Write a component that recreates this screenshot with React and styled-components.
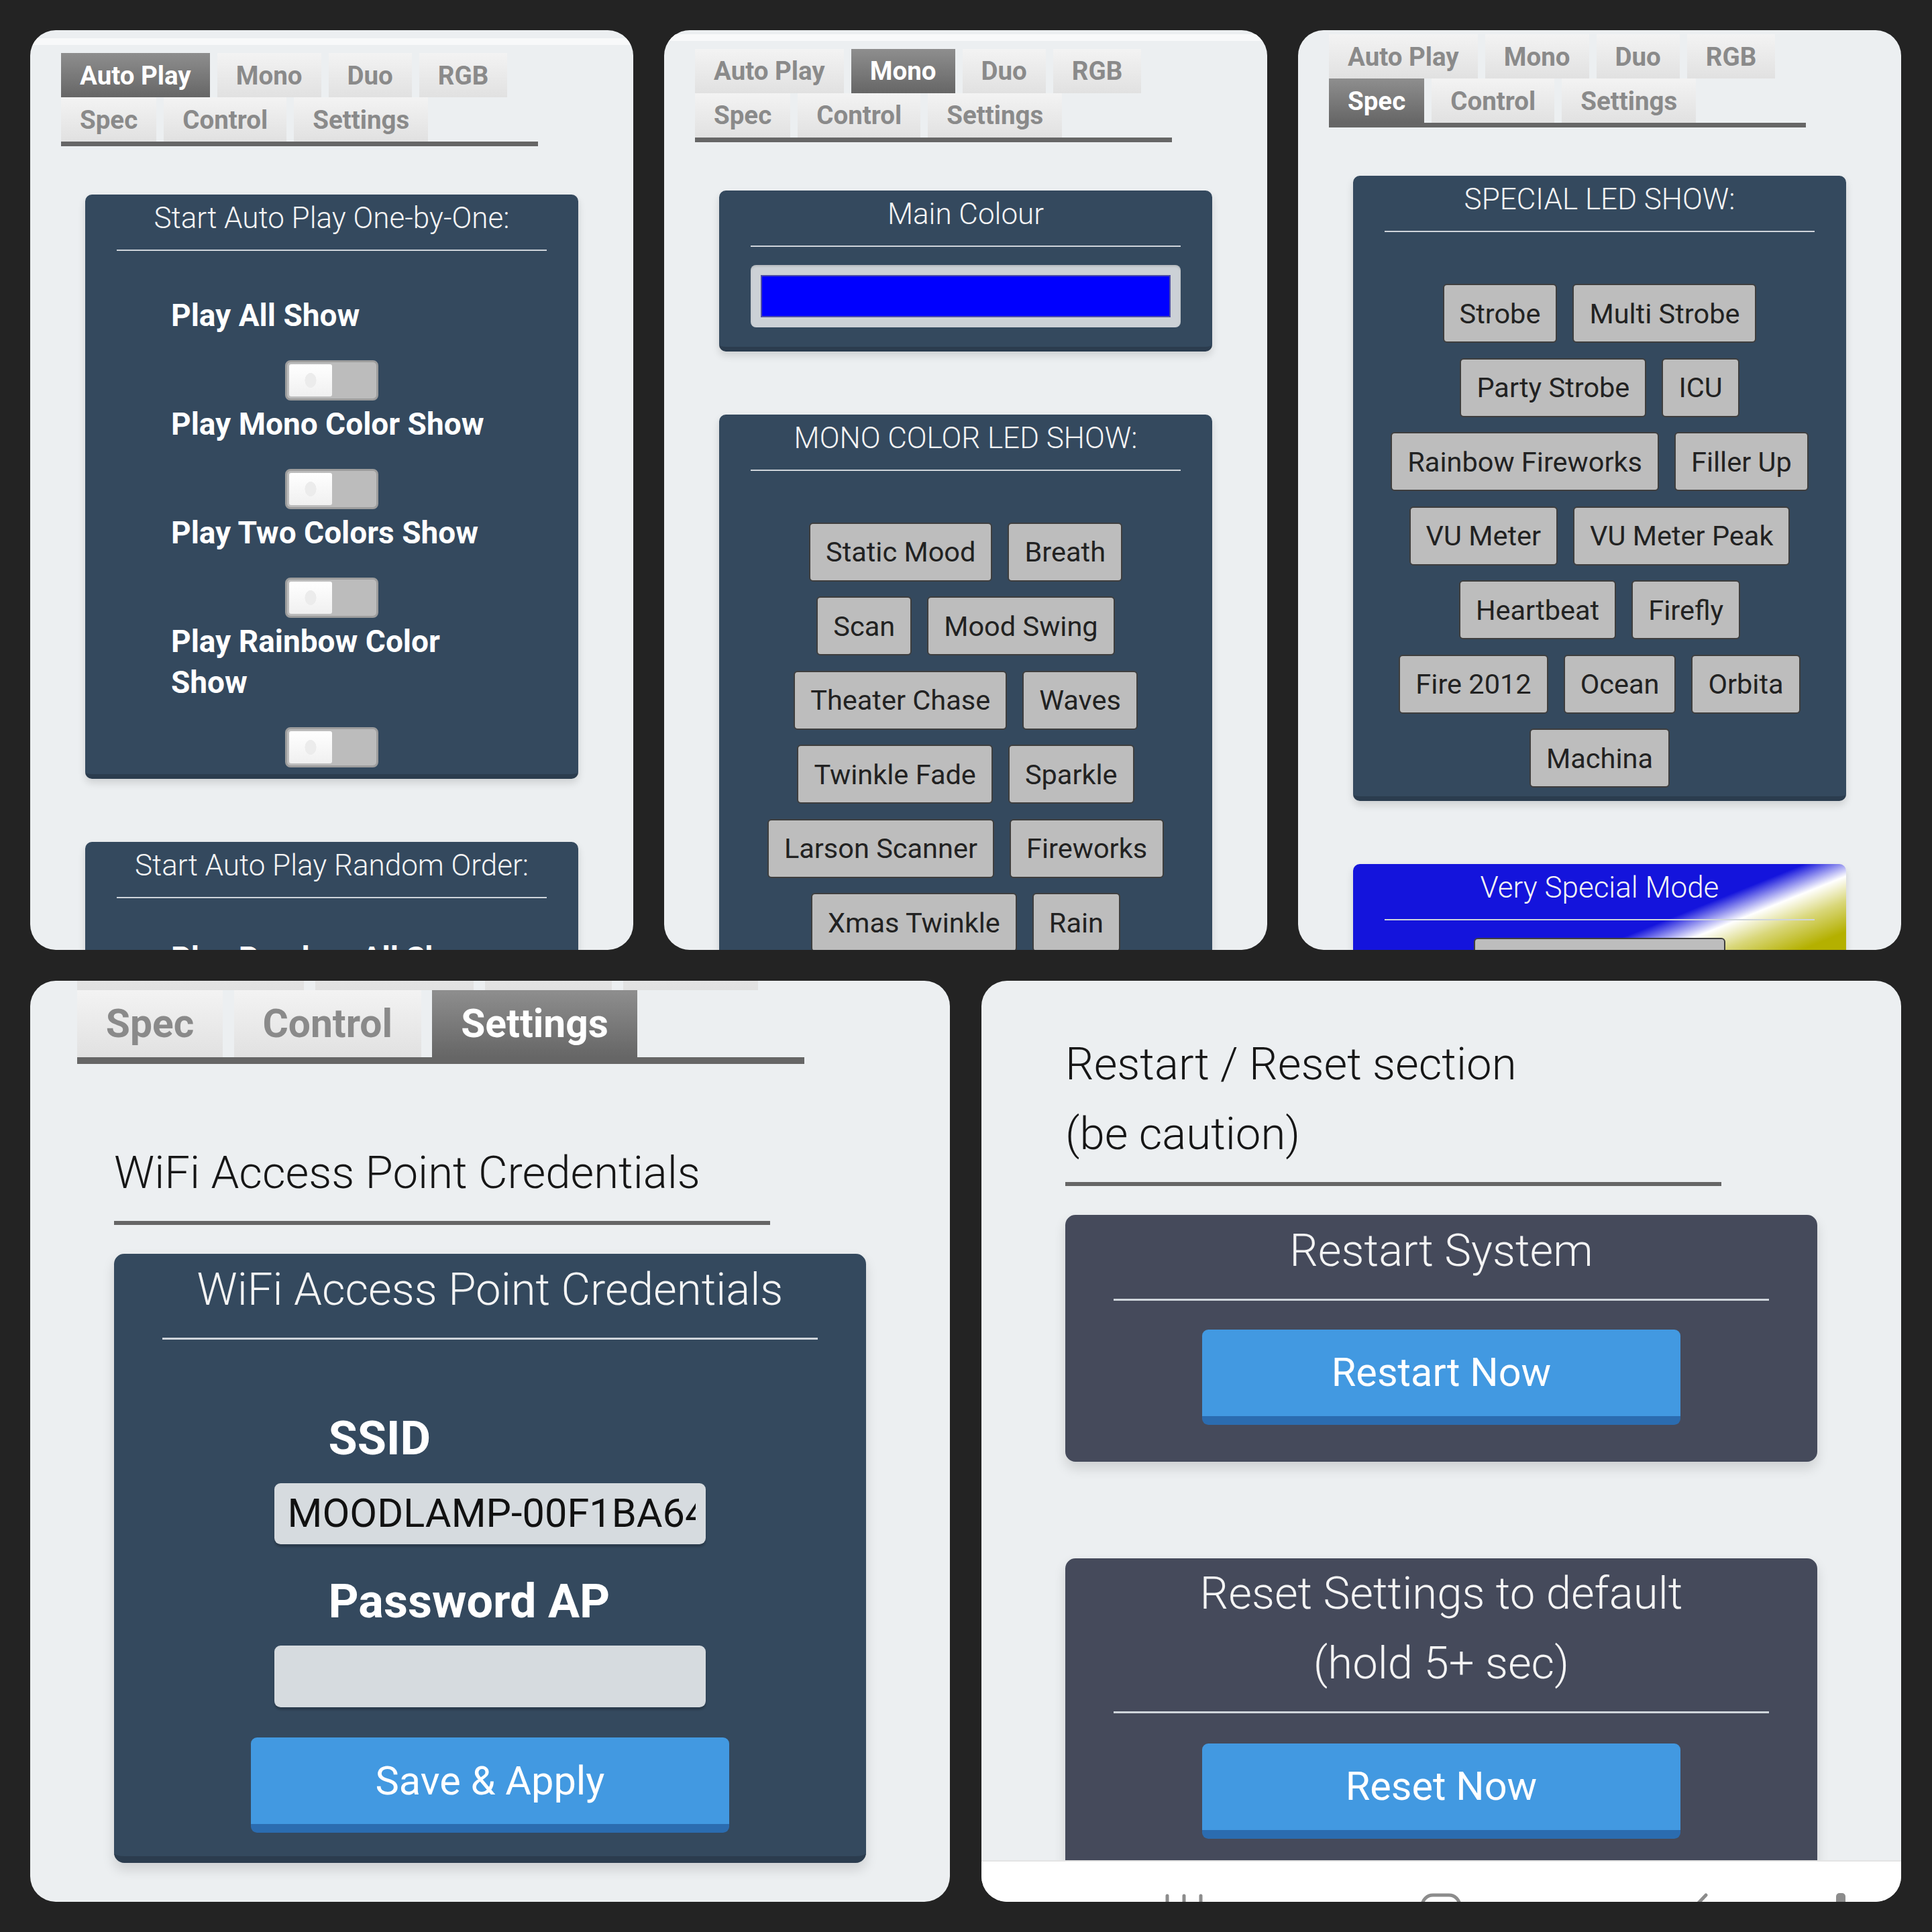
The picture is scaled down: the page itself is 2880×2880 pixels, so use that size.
import React from 'react';
import styled, { createGlobalStyle } from 'styled-components';

const GlobalStyle = createGlobalStyle`
  html, body {
    margin: 0;
    padding: 0;
    background: #232323;
  }
  body {
    font-family: Roboto, "Liberation Sans", sans-serif;
  }
  * {
    box-sizing: border-box;
  }
`;

const Board = styled.div`
  width: 2880px;
  height: 2880px;
  padding: 45px 46px 45px 45px;
  background: #232323;
  display: flex;
  flex-direction: column;
  gap: 46px;
`;

const TopRow = styled.div`
  display: grid;
  grid-template-columns: repeat(3, 899px);
  column-gap: 46px;
  height: 1371px;
`;

const BottomRow = styled.div`
  display: grid;
  grid-template-columns: repeat(2, 1371px);
  column-gap: 47px;
  height: 1373px;
`;

const Panel = styled.section`
  position: relative;
  overflow: hidden;
  border-radius: 38px;
  background: #eceff1;
`;

// one phone screenshot: the same page, zoomed and scrolled
const Screen = styled.div`
  display: flow-root;
  width: 899px;
  zoom: ${(p) => p.$zoom};
  margin-top: ${(p) => -p.$scroll}px;
`;

const PageTop = styled.div`
  margin-top: 12px;
  height: 10px;
  background: #f8f9fa;
`;

const TabBar = styled.nav`
  display: flex;
  flex-wrap: wrap;
  column-gap: 11px;
  width: 711px;
  margin: 12px 0 0 46px;
  border-bottom: 7px solid #666;
`;

const Tab = styled.div`
  height: 66px;
  padding: 0 28px;
  display: flex;
  align-items: center;
  font-size: 38.5px;
  font-weight: 700;
  color: ${(p) => (p.$active ? '#ffffff' : '#8a8a8a')};
  background: ${(p) =>
    p.$active
      ? 'linear-gradient(#8e8e8e, #666666)'
      : 'linear-gradient(#f3f3f3, #e1e1e1)'};
`;

const Content = styled.div`
  padding: ${(p) => p.$top}px 82px 0;
`;

const Card = styled.div`
  background: ${(p) =>
    p.$special
      ? 'linear-gradient(158deg, #1414dc 0px, #1414dc 252px, #ffffff 292px, #d9d77a 326px, #b4b000 369px)'
      : p.$slate
      ? '#454a5b'
      : '#34495e'};
  border-radius: 10px;
  border-bottom: ${(p) => (p.$slate ? 'none' : '7px solid #2b3c4e')};
  box-shadow: 0 6px 12px rgba(0, 0, 0, 0.13);
  padding-bottom: ${(p) => p.$pad}px;
  margin-bottom: 94px;
`;

const CardTitle = styled.div`
  padding: 1px 47px 0;
  font-size: 44px;
  font-weight: 300;
  line-height: 68px;
  text-align: center;
  color: #f4f4f4;
`;

const Divider = styled.div`
  margin: 13px 47px 0;
  height: 2px;
  background: #cfd5db;
`;

const ToggleList = styled.div`
  width: 479px;
  margin: ${(p) => p.$gap}px auto 0;
`;

const ToggleLabel = styled.div`
  width: 506px;
  margin-bottom: 36px;
  font-size: 46px;
  font-weight: 700;
  line-height: 61px;
  color: #ffffff;
`;

const Switch = styled.div`
  width: 139px;
  height: 60px;
  margin: 0 auto 5px;
  padding: 3px;
  border: 3px solid #9d9d9d;
  border-radius: 8px;
  background: #bcbcbc;
`;

const Knob = styled.div`
  width: 64px;
  height: 48px;
  border-radius: 3px;
  background: radial-gradient(ellipse 14px 18px at 50% 50%, #ececec 60%, transparent 62%),
    linear-gradient(#ffffff, #f0f0f0);
`;

const ShowGrid = styled.div`
  display: flex;
  flex-direction: column;
  row-gap: 22.5px;
  margin-top: 77px;
`;

const ShowRow = styled.div`
  display: flex;
  justify-content: center;
  column-gap: 23px;
`;

const ShowButton = styled.button`
  height: 88px;
  ${(p) => (p.$w ? `width: ${p.$w}px;` : '')}
  margin: ${(p) => (p.$w ? '26px auto 0' : '0')};
  display: block;
  padding: 0 23px;
  background: #bdbdbd;
  border: 2px solid #3e3e3e;
  border-radius: 6px;
  font-family: Roboto, "Liberation Sans", sans-serif;
  font-size: 41.5px;
  font-weight: 400;
  color: #222;
  white-space: nowrap;
`;

const ColorWell = styled.div`
  height: 93px;
  margin: 27px 47px 0;
  padding: 15px;
  border-radius: 8px;
  background: #ccd1d6;
  box-shadow: inset 0 2px 3px rgba(0, 0, 0, 0.12);
`;

const Swatch = styled.div`
  height: 100%;
  background: ${(p) => p.$color};
  border: 2px solid #4c4ca8;
`;

const SectionHeading = styled.h2`
  width: 641px;
  margin: 0 0 28px;
  padding-bottom: 13px;
  border-bottom: 4px solid #666;
  font-size: 44px;
  font-weight: 300;
  line-height: 68.5px;
  color: #161616;
`;

const FieldGroup = styled.div`
  width: 422px;
  margin: 63px auto 0;
`;

const FieldLabel = styled.label`
  display: block;
  padding-left: 53px;
  font-size: 46px;
  font-weight: 700;
  line-height: 68px;
  color: #ffffff;
`;

const TextBox = styled.input`
  display: block;
  width: 100%;
  height: 60px;
  margin: 9px 0 22px;
  padding: 0 10px 0 13px;
  border: none;
  border-radius: 6px;
  background: #d6dbdf;
  box-shadow: 0 2px 2px rgba(0, 0, 0, 0.2);
  font-family: Roboto, "Liberation Sans", sans-serif;
  font-size: 39px;
  color: #111;
  outline: none;
`;

const ActionButton = styled.button`
  display: block;
  width: 468px;
  height: 93px;
  margin: ${(p) => p.$gap}px auto 0;
  border: none;
  border-bottom: 9px solid #2b6cb0;
  border-radius: 6px;
  background: #4299e1;
  font-family: Roboto, "Liberation Sans", sans-serif;
  font-size: 39px;
  font-weight: 400;
  color: #ffffff;
`;

const NavBar = styled.div`
  position: absolute;
  left: 0;
  right: 0;
  bottom: 0;
  height: 62px;
  overflow: hidden;
  display: grid;
  grid-template-columns: repeat(3, 30.43%) 1fr;
  padding-left: 8%;
  background: #ffffff;
  border-top: 2px solid #e4e4e4;
`;

const NavSlot = styled.div`
  display: flex;
  justify-content: ${(p) => (p.$start ? 'flex-start' : 'center')};
  padding: 47px 0 0 ${(p) => (p.$start ? 13 : 0)}px;
`;

const TABS = ['Auto Play', 'Mono', 'Duo', 'RGB', 'Spec', 'Control', 'Settings'];

const ONE_BY_ONE = [
  'Play All Show',
  'Play Mono Color Show',
  'Play Two Colors Show',
  'Play Rainbow Color Show',
];

const MONO_SHOWS = [
  ['Static Mood', 'Breath'],
  ['Scan', 'Mood Swing'],
  ['Theater Chase', 'Waves'],
  ['Twinkle Fade', 'Sparkle'],
  ['Larson Scanner', 'Fireworks'],
  ['Xmas Twinkle', 'Rain'],
];

const SPECIAL_SHOWS = [
  ['Strobe', 'Multi Strobe'],
  ['Party Strobe', 'ICU'],
  ['Rainbow Fireworks', 'Filler Up'],
  ['VU Meter', 'VU Meter Peak'],
  ['Heartbeat', 'Firefly'],
  ['Fire 2012', 'Ocean', 'Orbita'],
  ['Machina'],
];

const Tabs = ({ active }) => (
  <>
    <PageTop />
    <TabBar>
      {TABS.map((t) => (
        <Tab key={t} $active={t === active}>
          {t}
        </Tab>
      ))}
    </TabBar>
  </>
);

const Toggles = ({ items, gap = 66 }) => (
  <ToggleList $gap={gap}>
    {items.map((label) => (
      <div key={label}>
        <ToggleLabel>{label}</ToggleLabel>
        <Switch>
          <Knob />
        </Switch>
      </div>
    ))}
  </ToggleList>
);

const Shows = ({ rows }) => (
  <ShowGrid>
    {rows.map((row) => (
      <ShowRow key={row[0]}>
        {row.map((name) => (
          <ShowButton key={name}>{name}</ShowButton>
        ))}
      </ShowRow>
    ))}
  </ShowGrid>
);

const AutoPlayPage = () => (
  <Screen $zoom={1} $scroll={0}>
    <Tabs active="Auto Play" />
    <Content $top={72}>
      <Card $pad={5}>
        <CardTitle>Start Auto Play One-by-One:</CardTitle>
        <Divider />
        <Toggles items={ONE_BY_ONE} />
      </Card>
      <Card $pad={5}>
        <CardTitle>Start Auto Play Random Order:</CardTitle>
        <Divider />
        <Toggles items={['Play Random All Show']} gap={59} />
      </Card>
    </Content>
  </Screen>
);

const MonoPage = () => (
  <Screen $zoom={1} $scroll={6.5}>
    <Tabs active="Mono" />
    <Content $top={72}>
      <Card $pad={29}>
        <CardTitle>Main Colour</CardTitle>
        <Divider />
        <ColorWell>
          <Swatch $color="#0000ff" />
        </ColorWell>
      </Card>
      <Card $pad={13}>
        <CardTitle>MONO COLOR LED SHOW:</CardTitle>
        <Divider />
        <Shows rows={MONO_SHOWS} />
      </Card>
    </Content>
  </Screen>
);

const SpecPage = () => (
  <Screen $zoom={1} $scroll={28}>
    <Tabs active="Spec" />
    <Content $top={72}>
      <Card $pad={13}>
        <CardTitle>SPECIAL LED SHOW:</CardTitle>
        <Divider />
        <Shows rows={SPECIAL_SHOWS} />
      </Card>
      <Card $special $pad={13}>
        <CardTitle>Very Special Mode</CardTitle>
        <Divider />
        <ShowButton $w={375} />
      </Card>
    </Content>
  </Screen>
);

const SettingsPage = () => (
  <Screen $zoom={1.525} $scroll={91}>
    <Tabs active="Settings" />
    <Content $top={72}>
      <SectionHeading>WiFi Access Point Credentials</SectionHeading>
      <Card $pad={23}>
        <CardTitle>WiFi Access Point Credentials</CardTitle>
        <Divider />
        <FieldGroup>
          <FieldLabel>SSID</FieldLabel>
          <TextBox readOnly value="MOODLAMP-00F1BA64" />
          <FieldLabel>Password AP</FieldLabel>
          <TextBox readOnly value="" />
        </FieldGroup>
        <ActionButton $gap={30}>Save &amp; Apply</ActionButton>
      </Card>
    </Content>
  </Screen>
);

const RestartPage = () => (
  <Screen $zoom={1.525} $scroll={0}>
    <Content $top={47}>
      <SectionHeading>
        Restart / Reset section
        <br />
        (be caution)
      </SectionHeading>
      <Card $slate $pad={36.5}>
        <CardTitle>Restart System</CardTitle>
        <Divider />
        <ActionButton $gap={28}>Restart Now</ActionButton>
      </Card>
      <Card $slate $pad={36.5}>
        <CardTitle>
          Reset Settings to default
          <br />
          (hold 5+ sec)
        </CardTitle>
        <Divider />
        <ActionButton $gap={29}>Reset Now</ActionButton>
      </Card>
    </Content>
  </Screen>
);

const PhoneNav = () => (
  <NavBar>
    <NavSlot>
      <svg width="62" height="40" viewBox="0 0 62 40">
        <g stroke="#8c8c8c" strokeWidth="5" strokeLinecap="round">
          <line x1="6" y1="4" x2="6" y2="40" />
          <line x1="31" y1="4" x2="31" y2="40" />
          <line x1="56" y1="4" x2="56" y2="40" />
        </g>
      </svg>
    </NavSlot>
    <NavSlot>
      <svg width="62" height="62" viewBox="0 0 62 62">
        <rect x="3" y="3" width="56" height="56" rx="16" fill="none" stroke="#8c8c8c" strokeWidth="5" />
      </svg>
    </NavSlot>
    <NavSlot>
      <svg width="30" height="50" viewBox="0 0 30 50">
        <path d="M26 3 L5 25 L26 47" fill="none" stroke="#8c8c8c" strokeWidth="5" strokeLinecap="round" strokeLinejoin="round" />
      </svg>
    </NavSlot>
    <NavSlot $start>
      <svg width="14" height="30" viewBox="0 0 14 30">
        <rect x="0" y="0" width="14" height="30" rx="5" fill="#8c8c8c" />
      </svg>
    </NavSlot>
  </NavBar>
);

const App = () => (
  <>
    <GlobalStyle />
    <Board>
      <TopRow>
        <Panel>
          <AutoPlayPage />
        </Panel>
        <Panel>
          <MonoPage />
        </Panel>
        <Panel>
          <SpecPage />
        </Panel>
      </TopRow>
      <BottomRow>
        <Panel>
          <SettingsPage />
        </Panel>
        <Panel>
          <RestartPage />
          <PhoneNav />
        </Panel>
      </BottomRow>
    </Board>
  </>
);

export default App;
